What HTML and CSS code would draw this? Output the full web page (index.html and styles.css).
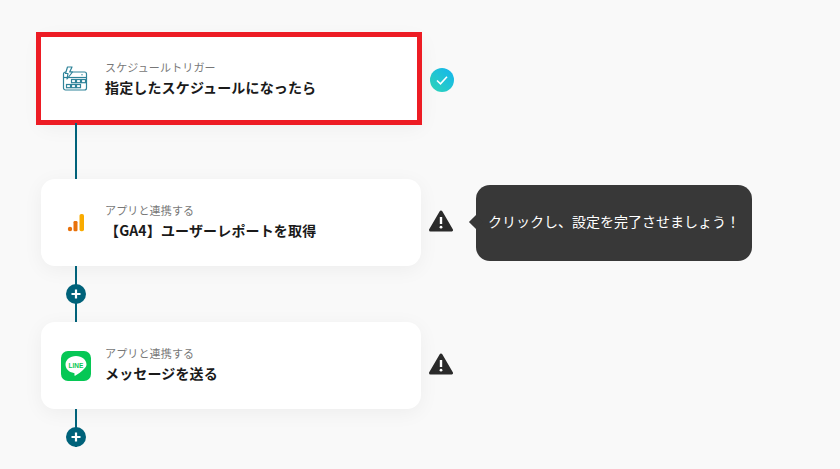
FILE: index.html
```html
<!DOCTYPE html>
<html lang="ja">
	<head>
		<meta charset="UTF-8" />
		<meta name="viewport" content="width=device-width, initial-scale=1.0" />
		<title>フローボット</title>
		<link rel="stylesheet" href="styles.css">
	</head>
	<body>
		<div class="flow">
			<div class="step">
				<div class="card card-active">
					<svg class="app-icon" viewBox="0 0 30 30" fill="none" stroke="#2f8399" stroke-width="1.2">
						<path d="M9 7h14.500a2 2 0 0 1 2 2v14a2 2 0 0 1-2 2h-19a2 2 0 0 1-2-2v-14a2 2 0 0 1 2-2h0.500" />
						<path d="M2.500 12.500h23" />
						<path d="M11 2h-4.500l-2 6.500h2.500l-1 5.500 5.500-7h-2.800z" fill="#fff" stroke-linejoin="round" />
						<circle cx="21" cy="9.700" r="0.700" fill="#2f8399" stroke="none" />
						<rect x="10.500" y="14.500" width="4" height="3.200" />
						<rect x="15.500" y="14.500" width="4" height="3.200" />
						<rect x="20.500" y="14.500" width="4" height="3.200" />
						<rect x="5.500" y="19.500" width="4" height="3.200" />
						<rect x="10.500" y="19.500" width="4" height="3.200" />
						<rect x="15.500" y="19.500" width="4" height="3.200" />
					</svg>
					<div class="card-text">
						<span class="card-label">スケジュールトリガー</span>
						<span class="card-title">指定したスケジュールになったら</span>
					</div>
				</div>
				<svg class="status status-ok" viewBox="0 0 24 24">
					<defs>
						<linearGradient id="check-fill" x1="0" y1="1" x2="1" y2="0">
							<stop offset="0" stop-color="#2fd6b6" />
							<stop offset="1" stop-color="#13b4f0" />
						</linearGradient>
					</defs>
					<circle cx="12" cy="12" r="12" fill="url(#check-fill)" />
					<path d="M7 12.500l3.500 3.300 6.500-7" fill="none" stroke="#fff" stroke-width="1.600" />
				</svg>
			</div>
			<div class="connector"></div>
			<div class="step">
				<div class="card">
					<svg class="app-icon" viewBox="0 0 30 30">
						<circle cx="9" cy="21" r="2.200" fill="#e8710a" />
						<rect x="12.500" y="13" width="4" height="10.200" rx="1.200" fill="#e8710a" />
						<rect x="18.500" y="6" width="4.500" height="17.200" rx="1.800" fill="#f9ab00" />
					</svg>
					<div class="card-text">
						<span class="card-label">アプリと連携する</span>
						<span class="card-title">【GA4】ユーザーレポートを取得</span>
					</div>
				</div>
				<svg class="status status-warn" viewBox="0 0 24 22">
					<path d="M12 2L22.500 20H1.500z" fill="#2b2b2b" stroke="#2b2b2b" stroke-width="3" stroke-linejoin="round" />
					<path d="M12 7v7" stroke="#fff" stroke-width="2.400" />
					<circle cx="12" cy="17.200" r="1.400" fill="#fff" />
				</svg>
				<div class="tooltip">クリックし、設定を完了させましょう！</div>
			</div>
			<div class="connector connector-add">
				<span class="add">
					<svg viewBox="0 0 20 20"><path d="M10 5.500v9M5.500 10h9" stroke="#fff" stroke-width="2.200" /></svg>
				</span>
			</div>
			<div class="step">
				<div class="card">
					<svg class="app-icon" viewBox="0 0 30 30">
						<rect width="30" height="30" rx="7" fill="#06c755" />
						<path d="M15 5c-6 0-10.500 3.800-10.500 8.600 0 4.300 3.500 7.800 8.400 8.500 1 .2.600 1.300.500 2-.1.700.500.800 1.100.400 2.600-1.500 5.400-3.400 7.500-5.500 2-1.800 3.500-3.400 3.500-5.400 0-4.800-4.500-8.600-10.500-8.600z" fill="#fff" />
						<text class="line-word" x="15" y="16.600" text-anchor="middle">LINE</text>
					</svg>
					<div class="card-text">
						<span class="card-label">アプリと連携する</span>
						<span class="card-title">メッセージを送る</span>
					</div>
				</div>
				<svg class="status status-warn" viewBox="0 0 24 22">
					<path d="M12 2L22.500 20H1.500z" fill="#2b2b2b" stroke="#2b2b2b" stroke-width="3" stroke-linejoin="round" />
					<path d="M12 7v7" stroke="#fff" stroke-width="2.400" />
					<circle cx="12" cy="17.200" r="1.400" fill="#fff" />
				</svg>
			</div>
			<div class="connector connector-add connector-end">
				<span class="add">
					<svg viewBox="0 0 20 20"><path d="M10 5.500v9M5.500 10h9" stroke="#fff" stroke-width="2.200" /></svg>
				</span>
			</div>
		</div>
	</body>
</html>
```

FILE: styles.css
```css
html,
body {
	height: 100%;
}
body {
	margin: 0;
	font-family: 'Noto Sans CJK JP', 'Noto Sans', sans-serif;
	background: #f9f9f9;
	color: #1a1a1a;
	overflow: hidden;
}
.flow {
	display: flex;
	flex-direction: column;
	padding: 36px 0 0 41px;
}
.step {
	position: relative;
	display: flex;
	align-items: center;
}
.card {
	position: relative;
	display: flex;
	align-items: center;
	gap: 14px;
	box-sizing: border-box;
	width: 380px;
	height: 87px;
	padding: 0 20px;
	background: #fff;
	border-radius: 14px;
	box-shadow: 0 4px 20px rgba(0, 0, 0, 0.05);
}
.card-active {
	border-radius: 0;
}
.card-active::after {
	content: '';
	position: absolute;
	top: -4px;
	right: -1px;
	bottom: -2px;
	left: -5px;
	border: 5px solid #ed1c24;
}
.app-icon {
	flex: none;
	width: 30px;
	height: 30px;
}
.line-word {
	font-family: 'Liberation Sans', sans-serif;
	font-size: 6.500px;
	font-weight: 700;
	fill: #06c755;
}
.card-text {
	display: flex;
	flex-direction: column;
	gap: 2px;
	padding-bottom: 4px;
	letter-spacing: 0.15px;
}
.card-label {
	font-size: 11px;
	line-height: 16px;
	color: #777;
}
.card-title {
	font-size: 14px;
	line-height: 20px;
	font-weight: 700;
	color: #1a1a1a;
}
.status {
	flex: none;
	margin-left: 9px;
}
.status-ok {
	width: 24px;
	height: 24px;
}
.status-warn {
	width: 24px;
	height: 22px;
	margin-left: 8px;
	margin-bottom: 4px;
}
.tooltip {
	position: absolute;
	top: 6px;
	left: 435px;
	display: flex;
	align-items: center;
	box-sizing: border-box;
	width: 276px;
	height: 76px;
	padding: 0 12px 4px;
	font-size: 14px;
	color: #fff;
	background: #383838;
	border-radius: 14px;
}
.tooltip::before {
	content: '';
	position: absolute;
	top: 32px;
	left: -5px;
	width: 10px;
	height: 10px;
	background: #383838;
	transform: rotate(45deg);
}
.connector {
	position: relative;
	display: flex;
	align-items: center;
	justify-content: center;
	box-sizing: border-box;
	width: 20px;
	height: 56px;
	margin-left: 25px;
}
.connector::before {
	content: '';
	position: absolute;
	top: 0;
	bottom: 0;
	left: 9px;
	width: 2px;
	background: #00627a;
}
.connector-end {
	height: 38px;
	align-items: flex-end;
}
.add {
	position: relative;
	display: block;
	width: 20px;
	height: 20px;
	background: #00627a;
	border-radius: 50%;
}
.add svg {
	display: block;
	width: 20px;
	height: 20px;
}
```
